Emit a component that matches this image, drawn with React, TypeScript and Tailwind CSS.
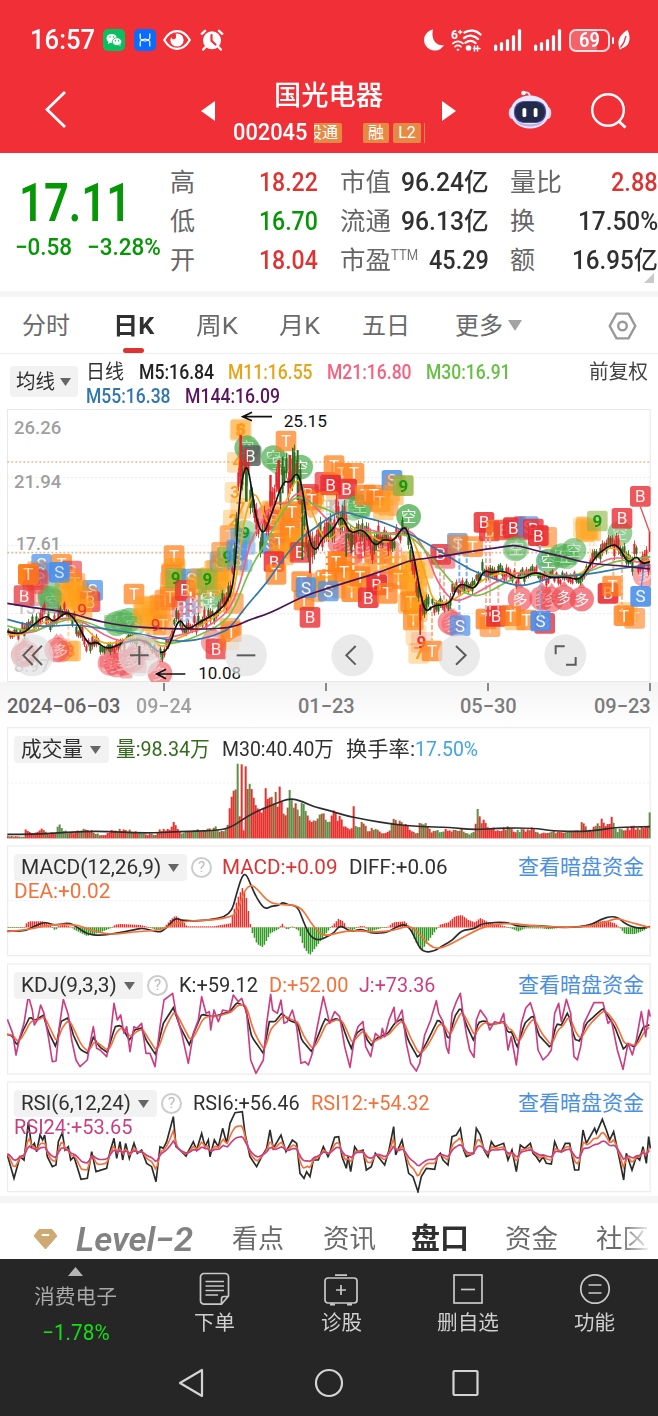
import { useLayoutEffect, useRef, useState, type ReactNode } from "react";

type Pt = [number, number];

const shift = (pts: Pt[], dx: number): Pt[] => pts.map(([x, y]) => [x + dx, y]);

/** Chart space uses three units per pixel. */
const LEFT = 22;
const RIGHT = 1950;
const STEP = 6;

function valueAt(pts: Pt[], x: number): number {
  if (x <= pts[0][0]) return pts[0][1];
  for (let i = 1; i < pts.length; i++) {
    if (x <= pts[i][0]) {
      const [x0, y0] = pts[i - 1];
      const [x1, y1] = pts[i];
      return y0 + ((y1 - y0) * (x - x0)) / (x1 - x0 || 1);
    }
  }
  return pts[pts.length - 1][1];
}

function sample(pts: Pt[]): Pt[] {
  const out: Pt[] = [];
  for (let x = LEFT; x <= RIGHT; x += STEP) out.push([x, valueAt(pts, x)]);
  return out;
}

function ema(pts: Pt[], k: number): Pt[] {
  let v = pts[0][1];
  return pts.map(([x, y]) => {
    v += (y - v) * k;
    return [x, v];
  });
}

const squeeze = (pts: Pt[], mid: number, k: number): Pt[] => pts.map(([x, y]) => [x, mid + (y - mid) * k]);

const noise = (i: number) => {
  const s = Math.sin(i * 127.1 + 31.7) * 43758.5453;
  return s - Math.floor(s);
};

const poly = (pts: Pt[]) => pts.map(([x, y]) => `${x.toFixed(1)},${y.toFixed(1)}`).join(" ");

function smooth(pts: Pt[]): string {
  let d = `M${pts[0][0]} ${pts[0][1]}`;
  for (let i = 1; i < pts.length - 1; i++) {
    const [x, y] = pts[i];
    const [nx, ny] = pts[i + 1];
    d += ` Q${x} ${y} ${(x + nx) / 2} ${(y + ny) / 2}`;
  }
  const last = pts[pts.length - 1];
  return d + ` L${last[0]} ${last[1]}`;
}

const M144: Pt[] = [
  [22, 595], [100, 608], [180, 618], [230, 630], [300, 650], [380, 664], [480, 670], [600, 673], [700, 668], [745, 645], [810, 625],
  [900, 578], [980, 550], [1080, 520], [1150, 498], [1220, 470], [1250, 463], [1320, 455], [1410, 440], [1510, 425], [1550, 420],
  [1600, 435], [1690, 455], [1760, 475], [1860, 482], [1950, 492],
];
const M55: Pt[] = [
  [22, 643], [80, 660], [150, 665], [220, 658], [290, 668], [360, 678], [440, 690], [500, 705], [560, 710], [620, 698], [660, 685],
  [690, 670], [745, 595], [800, 535], [850, 460], [900, 400], [950, 365], [1000, 328], [1030, 318], [1080, 335], [1130, 345],
  [1200, 372], [1260, 403], [1340, 450], [1410, 495], [1490, 525], [1560, 545], [1610, 532], [1660, 515], [1720, 512], [1780, 505],
  [1860, 490], [1950, 480],
];
const M30: Pt[] = [
  [22, 662], [90, 685], [150, 660], [210, 640], [260, 650], [330, 680], [400, 685], [440, 700], [490, 718], [540, 712], [600, 690],
  [660, 660], [700, 620], [750, 490], [800, 410], [840, 330], [890, 266], [940, 300], [980, 312], [1030, 340], [1070, 378],
  [1130, 385], [1180, 388], [1230, 390], [1280, 440], [1320, 490], [1370, 550], [1425, 578], [1480, 555], [1540, 518], [1600, 508],
  [1660, 512], [1720, 515], [1780, 495], [1840, 470], [1880, 465], [1950, 455],
];
const M21: Pt[] = [
  [22, 680], [90, 690], [150, 655], [200, 635], [260, 655], [310, 690], [370, 712], [440, 700], [500, 700], [540, 690], [600, 675],
  [650, 650], [690, 610], [720, 540], [750, 410], [780, 360], [810, 310], [835, 290], [860, 300], [890, 260], [920, 280],
  [960, 320], [1000, 365], [1030, 385], [1070, 380], [1100, 370], [1140, 385], [1190, 385], [1230, 370], [1280, 440], [1310, 530],
  [1360, 593], [1410, 575], [1480, 535], [1540, 505], [1600, 500], [1660, 512], [1730, 515], [1770, 495], [1820, 460], [1880, 458],
  [1910, 475], [1950, 455],
];
const M11: Pt[] = [
  [22, 688], [70, 695], [130, 650], [180, 640], [220, 640], [260, 670], [300, 715], [350, 715], [400, 690], [450, 705], [490, 730],
  [530, 700], [560, 690], [600, 662], [640, 640], [690, 600], [710, 520], [730, 350], [760, 258], [780, 290], [805, 365],
  [825, 345], [850, 310], [890, 213], [910, 250], [940, 330], [970, 405], [1000, 400], [1025, 355], [1050, 375], [1100, 380],
  [1130, 405], [1170, 415], [1210, 370], [1240, 400], [1280, 520], [1300, 595], [1350, 592], [1420, 545], [1480, 505],
  [1540, 505], [1600, 500], [1660, 515], [1720, 510], [1750, 505], [1800, 440], [1840, 425], [1880, 450], [1910, 475], [1950, 465],
];
const M5: Pt[] = [
  [22, 680], [60, 692], [100, 660], [140, 628], [160, 655], [200, 616], [230, 650], [265, 722], [290, 708], [320, 735], [370, 712],
  [430, 700], [485, 752], [510, 720], [537, 634], [560, 678], [600, 650], [650, 625], [690, 580], [705, 500], [720, 250],
  [740, 168], [755, 250], [770, 350], [790, 392], [810, 340], [850, 225], [870, 235], [892, 196], [910, 260], [928, 415],
  [950, 440], [965, 400], [1000, 375], [1025, 325], [1050, 390], [1090, 368], [1125, 428], [1150, 400], [1180, 412], [1210, 362],
  [1225, 380], [1245, 470], [1260, 560], [1276, 625], [1300, 600], [1350, 600], [1370, 545], [1390, 535], [1425, 557], [1450, 494],
  [1475, 505], [1510, 495], [1560, 527], [1605, 497], [1650, 520], [1700, 515], [1740, 527], [1770, 480], [1800, 440], [1840, 416],
  [1860, 430], [1885, 478], [1910, 450], [1925, 477], [1950, 470],
];

const SPREAD: Pt[] = [
  [22, 22], [100, 32], [130, 38], [260, 36], [300, 26], [420, 24], [520, 32], [620, 34], [690, 44], [715, 90], [740, 90], [780, 60],
  [830, 75], [890, 80], [920, 90], [950, 66], [1030, 66], [1100, 60], [1200, 46], [1260, 60], [1290, 30], [1360, 34], [1500, 36],
  [1600, 28], [1720, 26], [1780, 38], [1840, 44], [1940, 44], [1950, 60],
];

type Kind = "T" | "B" | "S" | "空" | "多" | "O" | "G" | "X";
type Mark = [number, number, Kind, number?, string?];
const FILLS: Record<Kind, string> = {
  T: "#ff7f1a", B: "#ea2e33", S: "#4a90ea", 空: "#4faf52", 多: "#f04c54", O: "#ffa11c", G: "#8fb23c", X: "#555555",
};

const MARKS: Mark[] = [
  [125, 478, "S"], [112, 500, "T", 0.5], [185, 478, "T"], [215, 498, "B", 0.6], [208, 520, "T", 0.6], [225, 535, "T", 0.5],
  [95, 515, "B", 0.6], [112, 525, "B", 0.6], [120, 505, "S", 0.5], [85, 508, "T", 0.95], [178, 502, "S", 0.85], [72, 572, "B"],
  [120, 572, "B", 0.4], [150, 580, "空", 0.6], [158, 588, "空", 0.5], [195, 560, "O", 0.6], [215, 575, "O", 0.6],
  [235, 560, "O", 0.7], [205, 600, "O", 0.5], [240, 585, "O", 0.6], [278, 556, "S"], [270, 590, "B"], [262, 575, "T", 0.5],
  [246, 613, "O", 0.6], [205, 738, "O", 0.45], [212, 738, "O", 0.5, "8"], [70, 750, "多", 0.6], [80, 745, "多", 0.4],
  [170, 735, "多", 0.5], [182, 735, "多", 0.4], [350, 656, "空", 0.6], [368, 650, "空", 0.5], [388, 645, "空", 0.6],
  [400, 660, "空", 0.4], [402, 567, "T"], [435, 605, "O", 0.55], [455, 620, "O", 0.55], [430, 640, "O", 0.5],
  [470, 640, "O", 0.55], [480, 600, "T", 0.6], [495, 585, "T", 0.6], [467, 660, "O", 0.5], [490, 660, "T", 0.5],
  [522, 452, "T"], [525, 490, "O", 0.6], [515, 510, "T", 0.6], [520, 545, "O", 0.6], [510, 575, "T", 0.6], [527, 520, "G", 0.7, "9"],
  [575, 522, "S", 0.7], [556, 556, "B", 0.7], [575, 595, "B", 0.4], [565, 620, "S", 0.4], [545, 605, "B", 0.4],
  [590, 545, "O", 0.6], [600, 520, "O", 0.5], [640, 570, "空", 0.5], [625, 580, "空", 0.4],
  [640, 545, "O", 0.4], [655, 520, "O", 0.55], [650, 495, "O", 0.5], [660, 470, "S", 0.6], [668, 500, "O", 0.6],
  [622, 522, "G", 0.7, "9"], [665, 442, "T", 0.6], [690, 392, "T", 0.6], [675, 540, "O", 0.4], [700, 480, "O", 0.5],
  [682, 455, "G", 0.7, "9"], [330, 775, "多", 0.5], [350, 780, "多", 0.5], [372, 775, "多", 0.5], [398, 765, "多", 0.5],
  [420, 735, "多", 0.35], [445, 730, "多", 0.3], [480, 805, "多", 0.6], [640, 712, "多", 0.5], [648, 732, "B"],
  [690, 670, "T", 0.5], [700, 595, "T", 0.6], [686, 705, "O", 0.3], [694, 680, "T", 0.7],
  [724, 72, "O", 0.4, "8"], [720, 76, "O", 0.4, "5"], [712, 172, "O", 0.35, "4"], [705, 262, "O", 0.3, "3"],
  [700, 345, "O", 0.35, "2"], [722, 310, "O", 0.35, "7"], [720, 400, "S", 0.5], [710, 435, "S", 0.6], [712, 465, "S", 0.5],
  [740, 128, "空"], [750, 140, "空", 0.4], [751, 152, "X", 0.8], [736, 382, "空", 0.4, "9"],
  [820, 158, "空"], [838, 172, "空", 0.5], [858, 108, "T"], [902, 186, "空"], [800, 338, "多", 0.6], [815, 318, "O", 0.6],
  [822, 345, "B", 0.4], [812, 415, "S", 0.8], [838, 415, "T", 0.8], [850, 365, "O", 0.6], [870, 380, "T", 0.8], [876, 320, "T", 0.8],
  [850, 450, "O", 0.6], [885, 420, "O", 0.5], [822, 470, "B", 0.85], [828, 508, "T", 0.75], [900, 400, "O", 0.5],
  [900, 442, "B", 0.75], [925, 268, "B", 0.75], [935, 285, "T", 0.7], [975, 232, "B", 0.7], [1002, 182, "T"], [1025, 205, "T", 0.6],
  [1062, 205, "T", 0.75], [992, 240, "B", 0.95], [1040, 252, "B", 0.85], [985, 290, "O", 0.4], [1010, 315, "S", 0.3],
  [1060, 310, "空", 0.5], [1080, 305, "空", 0.6], [1096, 270, "T", 0.8], [1122, 270, "T", 0.7], [1140, 290, "T", 0.6],
  [1150, 315, "O", 0.5], [1176, 226, "S", 0.85], [1186, 240, "T", 0.5], [1180, 270, "O", 0.5], [1210, 242, "G", 0.8, "9"],
  [1226, 334, "空", 0.8], [1020, 415, "多", 0.6], [1045, 425, "多", 0.5], [1060, 440, "多", 0.5], [1080, 430, "B", 0.45],
  [1115, 440, "多", 0.5], [1145, 440, "多", 0.6], [1170, 440, "多", 0.5], [1160, 460, "O", 0.5], [1120, 470, "O", 0.4],
  [1042, 480, "O", 0.5], [1008, 470, "T", 0.9], [1032, 500, "T", 0.75], [980, 525, "T", 0.75], [970, 545, "O", 0.6],
  [905, 530, "T", 0.75], [912, 585, "T", 0.75], [918, 548, "S", 0.8], [930, 637, "B", 0.8],
  [985, 558, "S"], [1055, 560, "T", 0.8], [1065, 530, "O", 0.5], [1080, 515, "T", 0.75],
  [1150, 530, "B", 0.4], [1130, 540, "B", 0.9], [1105, 578, "B", 0.85], [1162, 565, "T", 0.75],
  [1190, 480, "O", 0.5], [1195, 522, "T", 0.75], [1215, 500, "O", 0.5], [1235, 470, "O", 0.5], [1245, 500, "O", 0.6],
  [1235, 545, "O", 0.6], [1250, 560, "O", 0.6], [1225, 595, "O", 0.5], [1232, 590, "T", 0.7], [1250, 600, "O", 0.5],
  [1240, 645, "T", 0.7], [1252, 620, "O", 0.5], [1248, 690, "O", 0.3], [1256, 745, "O", 0.35, "7"],
  [1264, 712, "B", 0.15, "9"], [1296, 738, "T", 0.75], [1270, 490, "O", 0.5],
  [1335, 460, "B", 0.5], [1322, 448, "B", 0.8], [1372, 415, "S", 0.7], [1375, 420, "T", 0.6], [1418, 425, "T", 0.7],
  [1350, 652, "多", 0.6], [1362, 658, "多", 0.4], [1380, 662, "S"], [1468, 378, "B", 0.8], [1452, 352, "B", 0.85],
  [1490, 375, "O", 0.5], [1512, 375, "B", 0.6], [1540, 368, "B", 0.9], [1585, 365, "S", 0.7], [1600, 372, "B", 0.8],
  [1640, 397, "T", 0.6], [1615, 392, "B", 0.9], [1545, 432, "空", 0.45], [1550, 430, "空", 0.4], [1645, 468, "空", 0.7],
  [1685, 452, "空", 0.6], [1700, 455, "空", 0.5], [1722, 436, "空", 0.6], [1560, 582, "多", 0.65], [1625, 580, "多", 0.6],
  [1655, 584, "多", 0.6], [1692, 578, "多", 0.7], [1745, 582, "多", 0.7], [1470, 665, "T", 0.6], [1458, 642, "T", 0.8],
  [1500, 632, "B", 0.5], [1488, 634, "B", 0.85], [1545, 645, "O", 0.5], [1532, 632, "T", 0.7], [1580, 645, "T", 0.7],
  [1634, 655, "B", 0.8], [1622, 648, "S", 0.9], [1758, 372, "O", 0.5], [1772, 378, "O", 0.5], [1750, 368, "O", 0.3],
  [1792, 348, "G", 0.6, "9"], [1860, 384, "空", 0.6], [1866, 340, "B", 0.8], [1824, 565, "B", 0.9], [1838, 543, "T", 0.75],
  [1904, 640, "T", 0.6], [1882, 622, "O", 0.4], [1872, 632, "T", 0.8], [1935, 510, "多", 0.5], [1922, 574, "S", 0.9],
  [1921, 274, "B", 0.8],
];

/** Patches where many signals pile up: centre, radii, count, colour. */
const CLOUDS: [number, number, number, number, number, string][] = [
  [225, 570, 34, 44, 34, "#ffa11c"], [150, 575, 30, 26, 16, "#56b257"], [110, 525, 34, 34, 16, "#e8463c"],
  [455, 625, 48, 40, 46, "#ffa11c"], [515, 530, 30, 70, 30, "#ff8d1c"], [600, 530, 30, 30, 20, "#ffa11c"],
  [650, 510, 40, 50, 36, "#ffa11c"], [372, 650, 40, 28, 20, "#56b257"], [372, 770, 60, 34, 26, "#f0727a"],
  [865, 390, 44, 90, 50, "#ff7f1a"], [730, 430, 18, 60, 16, "#6aa5ea"], [930, 290, 34, 40, 20, "#ff7f1a"],
  [970, 540, 60, 40, 26, "#ff7f1a"], [1040, 480, 40, 50, 26, "#ff7f1a"], [1100, 430, 90, 40, 40, "#f26a6a"],
  [1130, 500, 70, 50, 30, "#ff7f1a"], [1150, 290, 50, 34, 24, "#ff7f1a"], [1240, 560, 28, 90, 60, "#ffa11c"],
  [1075, 300, 30, 24, 12, "#56b257"], [1530, 372, 70, 24, 20, "#ea2e33"], [1650, 582, 60, 22, 14, "#f04c54"],
  [1760, 372, 24, 24, 16, "#ffa11c"], [1670, 458, 50, 22, 14, "#4faf52"],
];

function Clouds() {
  return (
    <g opacity="0.55">
      {CLOUDS.map(([cx, cy, rx, ry, n, c], k) =>
        Array.from({ length: n }, (_, i) => {
          const a = noise(k * 97 + i) * Math.PI * 2;
          const r = Math.sqrt(noise(k * 53 + i + 300));
          const s = 16 + noise(k * 31 + i + 700) * 24;
          return (
            <rect key={`${k}-${i}`} x={cx + Math.cos(a) * r * rx - s / 2} y={cy + Math.sin(a) * r * ry - s / 2} width={s} height={s} rx="5" fill={c} />
          );
        }),
      )}
    </g>
  );
}

const RAILS: [number, number, number, string][] = [
  [553, 590, 670, "#fff"], [572, 560, 660, "#fff"], [545, 600, 660, "#f48aa0"], [562, 580, 650, "#7fb0ee"], [632, 560, 650, "#fff"],
  [590, 570, 640, "#ffe3c4"], [605, 570, 640, "#ffe3c4"], [975, 270, 350, "#fff"], [985, 290, 370, "#fff"], [980, 440, 530, "#fff"],
  [955, 440, 520, "#fff"], [1060, 400, 500, "#fff"], [1090, 400, 480, "#fff"], [1135, 420, 520, "#fff"], [1180, 420, 480, "#fff"],
  [1200, 400, 500, "#ffe3c4"], [1320, 480, 590, "#f6b2a8"], [1332, 490, 590, "#f6b2a8"], [1378, 440, 640, "#7fb0ee"],
  [1400, 440, 560, "#7fb0ee"], [1458, 400, 640, "#f6b2a8"], [1470, 400, 640, "#f6b2a8"], [1495, 520, 620, "#f6b2a8"],
  [1545, 470, 620, "#ffcfa8"], [1620, 420, 640, "#7fb0ee"], [1866, 410, 620, "#ffb27a"], [1296, 620, 710, "#ffb27a"],
  [205, 640, 710, "#ffd9a0"], [1770, 410, 480, "#ffe3c4"], [1782, 410, 470, "#ffe3c4"], [1840, 460, 520, "#ffb27a"],
];

function Marker({ m }: { m: Mark }) {
  const [x, y, kind, opacity = 0.72, digit] = m;
  const round = kind === "空" || kind === "多";
  const green = kind === "G" || (kind === "空" && digit);
  const label = digit ?? (kind === "O" || kind === "G" ? "" : kind === "X" ? "B" : kind);
  return (
    <g>
      {round ? (
        <>
          <circle cx={x} cy={y} r="37" fill={FILLS[kind]} opacity={opacity} />
          {kind === "多" && <path d={`M${x - 12} ${y - 34} L${x} ${y - 50} L${x + 12} ${y - 34}Z`} fill={FILLS[kind]} opacity={opacity} />}
        </>
      ) : (
        <rect x={x - 31} y={y - 31} width="62" height="62" rx="8" fill={FILLS[kind]} opacity={opacity} />
      )}
      {label && (
        <text
          x={x}
          y={y + (round ? 17 : 18)}
          textAnchor="middle"
          fontSize={round ? 46 : 51}
          opacity={digit || opacity >= 0.65 ? 0.95 : 0.55}
          fill={digit ? (green ? "#0a9a0a" : digit === "9" ? "#ea2e33" : "#ff9a1a") : "#fff"}
          fontWeight={digit ? 700 : 400}
        >
          {label}
        </text>
      )}
    </g>
  );
}

const PRICE_LINES: [Pt[], string][] = [
  [M11, "#f0a818"], [M21, "#f5617e"], [M30, "#74c043"], [M55, "#2f77ad"], [M144, "#4b1357"], [M5, "#111111"],
];

function Candles() {
  const bars = [];
  for (let x = LEFT + 2, i = 0; x < RIGHT; x += STEP, i++) {
    const mid = valueAt(M5, x + 7);
    const s = valueAt(SPREAD, x);
    const up = noise(i) > 0.42;
    const drift = (noise(i + 77) - 0.5) * s * 0.9;
    const a = mid + drift - s * (0.2 + noise(i + 900) * 0.6);
    const b = mid + drift + s * (0.2 + noise(i + 500) * 0.6);
    const c = up ? "#e0282c" : "#2f6b1c";
    bars.push(
      <g key={i} fill={c}>
        <rect x={x} y={a} width="2.5" height={b - a} />
        <rect x={x - 2} y={a + (b - a) * 0.2} width="6.5" height={(b - a) * 0.6} />
      </g>,
    );
  }
  return (
    <g>
      {bars}
      <path d="M718 90 V215 H726 V90Z M734 130 V210 H740 V130Z" fill="#e0282c" />
      <path d="M735 200 h8 v90 h-8z M890 135 h6 v150 h-6z M876 128 h5 v110 h-5z M845 155 h6 v110 h-6z" fill="#2f6b1c" />
      <path d="M808 210 h7 v90 h-7z M832 165 h8 v95 h-8z M866 150 h8 v80 h-8z" fill="#e0282c" />
      <path d="M904 335 h6 v130 h-6z M1036 380 h5 v75 h-5z M1052 370 h5 v75 h-5z" fill="#2f6b1c" />
      <path d="M927 420 h6 v85 h-6z M1258 600 h5 v90 h-5z M1946 380 h5 v60 h-5z" fill="#e0282c" />
    </g>
  );
}

function PriceChart() {
  return (
    <svg className="h-[273px] w-[644px]" viewBox="21 12 1932 819" fontFamily='Roboto,"Noto Sans CJK SC",sans-serif'>
      <rect x="22.5" y="13.5" width="1928" height="816" fill="#fff" stroke="#e8e8e8" strokeWidth="3" />
      <g strokeDasharray="6 6" fill="none">
        <path d="M22 217H1950M22 421H1950M22 626H1950" stroke="#e9e9e9" strokeWidth="3" />
        <path d="M22 171H1950M22 443H1950" stroke="#e2bd94" strokeWidth="5" />
      </g>
      {MARKS.slice(0, 40).map((m, i) => (
        <Marker key={i} m={m} />
      ))}
      <Clouds />
      {MARKS.slice(40).map((m, i) => (
        <Marker key={i} m={m} />
      ))}
      <Marker m={[85, 508, "T", 0.6]} />
      <Marker m={[178, 502, "S", 0.6]} />
      {RAILS.map(([x, y0, y1, c], i) => (
        <path key={i} d={`M${x} ${y0}V${y1}`} stroke={c} strokeWidth="6" strokeDasharray="14 6" />
      ))}
      <Candles />
      <g fontSize="56" fontWeight="500" fill="#8e8e8e" fillOpacity="0.85">
        <text x="42" y="87" textLength="142" lengthAdjust="spacingAndGlyphs">26.26</text>
        <text x="42" y="248" textLength="142" lengthAdjust="spacingAndGlyphs">21.94</text>
        <text x="48" y="436" textLength="134" lengthAdjust="spacingAndGlyphs">17.61</text>
        <text x="48" y="626" textLength="134" lengthAdjust="spacingAndGlyphs" fillOpacity="0.5">13.29</text>
        <text x="42" y="800" textLength="108" lengthAdjust="spacingAndGlyphs" fillOpacity="0.5">8.97</text>
      </g>
      <path d="M1921 305 L1950 385" stroke="#ea4a50" strokeWidth="4" />
      <path d="M1924 545 L1932 480" stroke="#4a90ea" strokeWidth="4" />
      {PRICE_LINES.map(([pts, c]) => (
        <path key={c} d={smooth(pts)} stroke={c} strokeWidth="5" fill="none" />
      ))}
      <text x="467" y="677" textAnchor="middle" fontSize="52" fill="#ea2e33">9</text>
      <text x="246" y="632" textAnchor="middle" fontSize="52" fill="#ea2e33">9</text>
      <g stroke="#111" strokeWidth="5" fill="none">
        <path d="M816 35H730M756 22L728 35L756 47" />
        <path d="M556 807H472M498 793L470 807L498 821" />
      </g>
      <g fontSize="52" fill="#111">
        <text x="851" y="66" textLength="130" lengthAdjust="spacingAndGlyphs">25.15</text>
        <text x="595" y="822" textLength="128" lengthAdjust="spacingAndGlyphs">10.08</text>
      </g>
      <g fill="#e0e0e0" fillOpacity="0.68">
        {[97, 418, 738, 1057, 1377, 1696].map((x) => (
          <circle key={x} cx={x} cy="751" r="63" />
        ))}
      </g>
      <g stroke="#5c5c5c" strokeWidth="6" fill="none">
        <path d="M98 722L70 751L98 780M126 722L98 751L126 780" />
        <path d="M390 751H446M418 723V779" />
        <path d="M710 751H766" />
        <path d="M1067 723L1039 751L1067 779" />
        <path d="M1368 723L1397 751L1368 779" />
        <path d="M1667 748V724H1694M1727 756V779H1698" />
      </g>
    </svg>
  );
}

const VOLUME: Pt[] = [
  [22, 8], [72, 6], [78, 28], [86, 26], [92, 14], [112, 18], [120, 28], [134, 28], [142, 16], [156, 18], [168, 18], [174, 50],
  [180, 40], [190, 22], [230, 20], [250, 28], [270, 28], [300, 10], [322, 14], [336, 24], [360, 28], [400, 24], [440, 12],
  [472, 14], [480, 28], [505, 26], [514, 38], [521, 50], [528, 32], [545, 16], [600, 26], [636, 30], [642, 44], [650, 26],
  [682, 26], [690, 92], [697, 128], [703, 150], [708, 140],
];
const VOLUME_TAIL: Pt[] = [
  [744, 146], [750, 172], [756, 140], [762, 110], [770, 90], [780, 88], [790, 68], [797, 154], [803, 116], [810, 118], [816, 128],
  [822, 90], [828, 137], [833, 90], [840, 150], [848, 76], [858, 70], [864, 90], [870, 142], [878, 88], [888, 110], [898, 52],
  [906, 110], [914, 92], [924, 60], [932, 45], [940, 55], [950, 52], [965, 80], [978, 60], [984, 55], [1004, 78], [1026, 55],
  [1045, 35], [1056, 36], [1062, 86], [1068, 36], [1086, 52], [1104, 24], [1122, 34], [1144, 16], [1168, 22], [1176, 62], [1182, 74],
  [1190, 45], [1200, 68], [1214, 45], [1224, 42], [1236, 22], [1252, 12], [1260, 54], [1280, 38], [1294, 20], [1354, 28],
  [1384, 28], [1399, 12], [1422, 18], [1428, 50], [1434, 94], [1440, 64], [1450, 50], [1464, 34], [1484, 28], [1524, 34], [1544, 22],
  [1594, 30], [1614, 16], [1654, 24], [1684, 18], [1724, 22], [1740, 22], [1746, 66], [1752, 54], [1760, 22], [1778, 26],
  [1784, 55], [1796, 42], [1806, 62], [1820, 40], [1836, 62], [1848, 22], [1884, 34], [1914, 34], [1942, 30], [1948, 84],
];
const PEAKS: Record<number, [number, string]> = {
  710: [224, "#628f49"], 716: [66, "#e6312f"], 722: [222, "#e6312f"], 728: [24, "#e6312f"], 734: [216, "#e6312f"], 740: [148, "#ab5a38"],
};
const VOLUME_MA: Pt[] = [
  [22, 328], [100, 328], [200, 322], [300, 318], [430, 325], [540, 320], [640, 317], [690, 310], [750, 268], [820, 238], [870, 219],
  [910, 230], [940, 245], [990, 257], [1030, 270], [1100, 285], [1180, 298], [1260, 305], [1350, 307], [1420, 315], [1500, 309],
  [1600, 309], [1660, 318], [1740, 320], [1800, 315], [1850, 307], [1950, 305],
];

function PanelFrame({ children, top, bottom, guide }: { children: ReactNode; top: number; bottom: number; guide: number }) {
  return (
    <>
      <rect x="22.5" y={top} width="1928" height={bottom - top} fill="#fff" stroke="#ededed" strokeWidth="4" />
      <path d={`M22 ${guide}H1950`} stroke="#ededed" strokeWidth="3" strokeDasharray="6 6" />
      {children}
    </>
  );
}

function VolumeChart() {
  const bars = [];
  for (let x = 20, i = 0; x < RIGHT - 2; x += STEP, i++) {
    const pts = x < 740 ? VOLUME : VOLUME_TAIL;
    const jitter = x < 680 || x > 970 ? 0.7 + noise(i + 40) * 0.42 : 0.94 + noise(i + 40) * 0.1;
    const run = noise(Math.floor(i / 3) + 12);
    const r = run * 0.7 + noise(i + 5) * 0.3;
    const peak = PEAKS[x];
    const h = peak ? peak[0] : Math.max(valueAt(pts, x + 2), valueAt(pts, x + 4)) * jitter;
    const c = peak ? peak[1] : x > 1940 || (x > 1426 && x < 1436) || x === 746 ? "#628f49" : r > 0.48 ? "#e6312f" : r > 0.27 ? "#ab5a38" : "#628f49";
    bars.push(<rect key={i} x={x} y={340 - h} width="6" height={h} fill={c} />);
  }
  return (
    <svg className="h-[113px] w-[644px]" viewBox="21 6 1932 339">
      <PanelFrame top={8} bottom={340} guide={174}>
        {bars}
        <path d={smooth(VOLUME_MA)} stroke="#2c2c2c" strokeWidth="5" fill="none" />
      </PanelFrame>
    </svg>
  );
}

const HIST: Pt[] = [
  [22, -2], [70, -2], [80, 15], [90, 18], [130, 18], [150, 4], [165, -10], [175, 5], [190, 8], [210, 2], [220, -6], [260, -26],
  [300, -15], [330, -3], [345, 8], [360, 10], [420, 7], [440, 2], [470, -8], [490, -2], [510, 22], [525, 35], [545, 22], [560, 3],
  [640, 3], [690, 12], [700, 50], [715, 95], [728, 122], [738, 88], [750, 10], [755, -15], [770, -50], [788, -60], [810, -18],
  [835, -5], [845, 12], [860, -8], [875, 3], [895, -10], [910, -60], [928, -84], [950, -55], [985, -8], [999, 8], [1014, 25],
  [1029, 18], [1039, 0], [1054, -10], [1079, 4], [1094, 3], [1104, -14], [1144, -2], [1164, 2], [1179, 15], [1214, 18], [1229, 0],
  [1244, -40], [1264, -70], [1284, -40], [1309, -5], [1319, 8], [1344, 15], [1364, 33], [1384, 37], [1404, 22], [1424, 15],
  [1439, 28], [1464, 15], [1514, 3], [1534, -4], [1554, -12], [1574, -3], [1624, -3], [1644, -6], [1674, -2], [1734, 3],
  [1784, 15], [1814, 20], [1844, 12], [1859, -2], [1874, -20], [1904, -20], [1934, -8], [1950, 5],
];
const DIFF: Pt[] = [
  [22, 618], [70, 620], [100, 605], [135, 590], [165, 602], [205, 592], [230, 605], [260, 627], [300, 632], [350, 625], [400, 615],
  [430, 608], [475, 624], [500, 610], [525, 578], [550, 588], [620, 587], [692, 572], [710, 505], [726, 452], [738, 446],
  [752, 478], [770, 520], [795, 554], [815, 542], [835, 543], [848, 531], [865, 540], [893, 543], [910, 590], [930, 634], [955, 647],
  [984, 634], [1004, 622], [1014, 606], [1029, 604], [1054, 622], [1084, 610], [1114, 626], [1164, 622], [1184, 608], [1214, 596],
  [1234, 615], [1254, 660], [1268, 680], [1300, 681], [1334, 658], [1359, 645], [1384, 616], [1424, 612], [1446, 594], [1524, 591],
  [1554, 606], [1604, 600], [1674, 608], [1764, 605], [1804, 582], [1834, 574], [1856, 578], [1874, 596], [1914, 612], [1950, 605],
];
const DEA: Pt[] = [
  [22, 620], [90, 614], [150, 598], [230, 598], [270, 615], [330, 630], [400, 620], [480, 616], [520, 597], [560, 588], [640, 585],
  [695, 575], [712, 560], [735, 492], [755, 479], [775, 495], [800, 527], [830, 539], [900, 540], [930, 590], [960, 628], [984, 632],
  [1044, 615], [1124, 622], [1184, 616], [1224, 602], [1249, 615], [1274, 648], [1304, 672], [1334, 666], [1384, 640], [1434, 612],
  [1484, 596], [1544, 596], [1604, 603], [1684, 607], [1774, 605], [1834, 585], [1854, 580], [1884, 590], [1950, 608],
];

function MacdChart() {
  const bars = [];
  for (let x = LEFT + 2, i = 0; x < RIGHT; x += STEP, i++) {
    const v = valueAt(HIST, x);
    bars.push(<rect key={i} x={x - 1} y={v > 0 ? 607 - v : 607} width="4.5" height={Math.max(2, Math.abs(v))} fill={v > 0 ? "#e6312f" : "#2f9a22"} />);
  }
  return (
    <svg className="h-[112px] w-[644px]" viewBox="21 360 1932 336">
      <PanelFrame top={363} bottom={692} guide={527}>
        <path d="M22 607H1950" stroke="#f0b8a8" strokeWidth="2" />
        {bars}
        <path d={smooth(DIFF)} stroke="#2b2b2b" strokeWidth="5" fill="none" />
        <path d={smooth(DEA)} stroke="#f4713a" strokeWidth="5" fill="none" />
      </PanelFrame>
    </svg>
  );
}

const J: Pt[] = [
  [22, 178], [38, 220], [48, 285], [60, 230], [72, 190], [85, 108], [97, 150], [103, 195], [112, 180], [122, 135], [132, 160],
  [145, 230], [157, 305], [168, 303], [178, 200], [190, 118], [205, 165], [215, 240], [228, 300], [240, 320], [262, 300], [270, 250],
  [280, 200], [290, 265], [300, 270], [320, 290], [330, 240], [342, 130], [352, 180], [362, 165], [372, 220], [380, 200], [390, 275],
  [402, 200], [410, 205], [425, 190], [438, 280], [450, 280], [465, 320], [480, 200], [492, 120], [518, 100], [528, 160], [545, 220],
  [565, 310], [580, 220], [595, 180], [605, 110], [618, 160], [628, 155], [632, 210], [642, 150], [655, 185], [668, 150], [688, 155],
  [700, 105], [715, 125], [725, 115], [740, 160], [752, 300], [768, 340], [790, 300], [800, 190], [812, 103], [818, 150],
  [832, 160], [843, 120], [852, 190], [862, 185], [877, 150], [890, 200], [903, 310], [915, 305], [925, 315], [937, 280], [950, 210],
  [970, 110],
  ...shift([
    [5, 190], [20, 155], [35, 170], [50, 260], [66, 322], [80, 230], [90, 200], [105, 185], [113, 260], [128, 290], [142, 220],
    [158, 235], [163, 205], [170, 230], [183, 180], [198, 142], [203, 190], [222, 150], [235, 250], [248, 310], [265, 333], [275, 310],
    [290, 225], [308, 180], [325, 122], [332, 160], [345, 185], [355, 260], [362, 280], [372, 160], [385, 125], [397, 100], [405, 160],
    [415, 220], [425, 270], [438, 292], [445, 180], [457, 150], [475, 175], [485, 210], [500, 185], [515, 190], [527, 160], [540, 270],
    [550, 230], [565, 315], [580, 190], [593, 145], [607, 128], [620, 170], [630, 270], [645, 300], [660, 285], [670, 270], [680, 160],
    [692, 130], [700, 185], [715, 118], [728, 160], [738, 290], [748, 300], [758, 260], [768, 190], [798, 128], [825, 128], [840, 190],
    [850, 180], [868, 270], [885, 328], [900, 250], [913, 285], [925, 240], [940, 155], [953, 230], [962, 150], [967, 170],
  ], 984),
];
const K: Pt[] = [
  [22, 223], [38, 228], [50, 258], [70, 210], [90, 170], [103, 182], [130, 166], [145, 215], [168, 262], [182, 185], [205, 173],
  [220, 225], [240, 268], [262, 280], [280, 232], [300, 262], [322, 277], [345, 200], [362, 196], [390, 243], [402, 210], [425, 204],
  [438, 240], [467, 284], [490, 190], [520, 143], [540, 200], [568, 254], [585, 210], [605, 163], [640, 170], [690, 155],
  [710, 128], [735, 138], [755, 230], [790, 280], [808, 185], [825, 185], [845, 160], [870, 182], [892, 190], [905, 240], [935, 275],
  [955, 225], [975, 176],
  ...shift([
    [5, 185], [25, 175], [40, 185], [55, 230], [70, 265], [85, 220], [105, 205], [118, 240], [130, 256], [145, 235], [180, 220],
    [200, 190], [222, 176], [240, 240], [270, 294], [300, 240], [330, 178], [345, 195], [362, 242], [380, 170], [398, 142], [415, 195],
    [438, 244], [450, 188], [470, 182], [485, 195], [527, 185], [540, 218], [552, 215], [567, 264], [590, 190], [615, 166], [632, 225],
    [668, 264], [685, 192], [700, 195], [720, 156], [740, 238], [755, 243], [775, 190], [825, 145], [860, 200], [887, 269], [900, 250],
    [920, 262], [945, 203], [967, 193],
  ], 984),
];

function KdjChart() {
  const k = sample(K);
  return (
    <svg className="h-[112px] w-[644px]" viewBox="21 9 1932 336">
      <PanelFrame top={12} bottom={342} guide={177}>
        <polyline points={poly(k)} stroke="#2b2b2b" strokeWidth="5" fill="none" />
        <polyline points={poly(ema(k, 0.38))} stroke="#f4713a" strokeWidth="5" fill="none" />
        <polyline points={poly(J)} stroke="#cb3f80" strokeWidth="5" fill="none" strokeLinejoin="round" />
      </PanelFrame>
    </svg>
  );
}

const RSI: Pt[] = [
  [22, 585], [42, 655], [60, 590], [72, 600], [85, 487], [95, 560], [103, 550], [110, 575], [120, 525], [128, 540], [134, 525],
  [142, 590], [157, 620], [168, 615], [175, 545], [187, 518], [195, 570], [205, 560], [212, 600], [222, 590], [243, 658], [262, 655],
  [275, 575], [288, 635], [320, 625], [330, 575], [342, 535], [350, 595], [360, 545], [368, 600], [377, 550], [388, 595], [402, 550],
  [412, 580], [425, 570], [440, 610], [455, 620], [468, 665], [480, 560], [490, 565], [500, 545], [520, 470], [528, 560], [545, 575],
  [558, 588], [580, 545], [590, 570], [605, 520], [615, 560], [625, 540], [630, 590], [643, 540], [655, 560], [668, 505], [680, 550],
  [690, 490], [705, 458], [727, 455], [735, 520], [750, 590], [770, 620], [785, 590], [800, 565], [810, 510], [820, 565], [843, 525],
  [858, 575], [877, 540], [890, 550], [900, 640], [912, 655], [920, 635], [930, 650], [940, 600], [955, 600], [970, 560],
  ...shift([
    [0, 590], [5, 580], [20, 532], [32, 530], [42, 590], [55, 625], [60, 590], [68, 635], [80, 560], [90, 575], [105, 570],
    [115, 630], [130, 620], [142, 580], [170, 615], [183, 570], [197, 500], [203, 585], [222, 540], [232, 590], [242, 640], [255, 650],
    [270, 695], [280, 650], [295, 625], [320, 628], [328, 590], [337, 580], [345, 600], [360, 615], [372, 530], [385, 525], [397, 505],
    [407, 570], [415, 590], [437, 580], [445, 505], [457, 525], [468, 570], [480, 590], [490, 545], [500, 560], [527, 550], [540, 600],
    [552, 570], [565, 635], [577, 555], [590, 565], [607, 550], [615, 580], [625, 590], [635, 605], [645, 590], [655, 610], [670, 612],
    [680, 545], [690, 570], [700, 575], [712, 550], [725, 550], [740, 630], [752, 630], [765, 510], [775, 550], [800, 505], [805, 520],
    [823, 478], [835, 510], [845, 540], [857, 515], [875, 600], [887, 660], [895, 580], [912, 630], [925, 590], [935, 600], [945, 560],
    [955, 610], [962, 530], [967, 565],
  ], 984),
];

function RsiChart() {
  const base = sample(RSI);
  return (
    <svg className="h-[112px] w-[644px]" viewBox="21 363 1932 336">
      <PanelFrame top={366} bottom={695} guide={531}>
        <polyline points={poly(RSI)} stroke="#2b2b2b" strokeWidth="5" fill="none" />
        <polyline points={poly(squeeze(ema(base, 0.72), 578, 0.66))} stroke="#f4713a" strokeWidth="5" fill="none" />
        <polyline points={poly(squeeze(ema(base, 0.5), 578, 0.4))} stroke="#cb3f80" strokeWidth="5" fill="none" />
      </PanelFrame>
    </svg>
  );
}

/** One line of text set to a fixed advance width. */
function Fit({ w, className = "", children }: { w: number; className?: string; children: ReactNode }) {
  const ref = useRef<HTMLSpanElement>(null);
  const [scale, setScale] = useState(1);
  useLayoutEffect(() => {
    if (ref.current && ref.current.offsetWidth) setScale(w / ref.current.offsetWidth);
  }, [w]);
  return (
    <span className={`inline-block shrink-0 whitespace-nowrap ${className}`} style={{ width: w }}>
      <span ref={ref} className="inline-block origin-left" style={{ transform: `scaleX(${scale})` }}>
        {children}
      </span>
    </span>
  );
}

function Signal() {
  return (
    <svg className="h-[22px] w-[28px]" viewBox="0 0 28 22" fill="#fff">
      <rect x="0" y="15.5" width="3.2" height="6.5" rx="1.6" />
      <rect x="5.9" y="13" width="3.2" height="9" rx="1.6" />
      <rect x="11.9" y="10" width="3.2" height="12" rx="1.6" />
      <rect x="17.9" y="6" width="3.2" height="16" rx="1.6" />
      <rect x="23.9" y="0" width="3.2" height="22" rx="1.6" />
    </svg>
  );
}

function StatusBar() {
  return (
    <div className="flex h-[80px] items-center pl-[30px] text-white">
      <Fit w={65} className="text-[28px] leading-[28px] font-medium">16:57</Fit>
      <svg className="ml-[8px] h-[22px] w-[22px]" viewBox="0 0 22 22">
        <rect width="22" height="22" rx="5" fill="#07c160" />
        <ellipse cx="8.7" cy="9.3" rx="5.2" ry="4.4" fill="#fff" />
        <path d="M5.5 12.5 L5 15 L8 13.4Z M17 15 l.6 2.2 -2.6-1.4Z" fill="#fff" />
        <ellipse cx="14" cy="12.7" rx="4.7" ry="3.9" fill="#fff" stroke="#07c160" strokeWidth=".8" />
        <g fill="#07c160"><circle cx="7" cy="8" r=".8" /><circle cx="10.4" cy="8" r=".8" /><circle cx="12.5" cy="11.8" r=".7" /><circle cx="15.5" cy="11.8" r=".7" /></g>
      </svg>
      <svg className="ml-[9px] h-[22px] w-[22px]" viewBox="0 0 22 22">
        <rect width="22" height="22" rx="5" fill="#0a6bff" />
        <path d="M6.2 4.5V9.5M15.8 4.5V9.5M6.2 17.5V12.5M15.8 17.5V12.5M6.2 9.5C8.5 12.8 13.5 12.8 15.8 9.5M6.2 12.5C8.5 9.2 13.5 9.2 15.8 12.5" stroke="#fff" strokeWidth="1.2" fill="none" />
      </svg>
      <svg className="ml-[7px] h-[22px] w-[28px]" viewBox="0 0 28 22">
        <path d="M1.2 11C5 4.6 9.2 2.2 14 2.2S23 4.6 26.8 11C23 17.4 18.8 19.8 14 19.8S5 17.4 1.2 11Z" fill="none" stroke="#fff" strokeWidth="2.2" />
        <circle cx="14" cy="11" r="6.6" fill="#fff" />
        <path d="M8 8C9 10.5 11 11 12.5 9.5 13.6 8 13.3 5.5 12 4.3L7 6Z" fill="#f12f37" />
      </svg>
      <svg className="ml-[9px] h-[22px] w-[24px]" viewBox="0 0 24 22">
        <circle cx="12" cy="11.3" r="9" fill="#fff" />
        <path d="M1.8 4.8 5 1.8M22.2 4.8 19 1.8M5.5 18 3.2 20.5M18.5 18 20.8 20.5" stroke="#fff" strokeWidth="2.4" strokeLinecap="round" />
        <path d="M11.5 6V11.8L15.5 15.5" stroke="#f12f37" strokeWidth="2.2" fill="none" strokeLinecap="round" />
      </svg>
      <svg className="ml-[200px] h-[22px] w-[20px]" viewBox="0 0 20 22">
        <path d="M9 0.5A10.6 10.6 0 1 0 20 16C13 17.5 6.5 11 9 .5Z" fill="#fff" />
      </svg>
      <svg className="ml-[7px] h-[23px] w-[31px]" viewBox="0 0 31 23" fill="none" stroke="#fff" strokeWidth="2.3" strokeLinecap="round">
        <path d="M13.5 3.5C19 .2 25.5 1.2 29.5 5.5M13 9C18 5.2 24 6.6 27 10M14.5 13.7C18 11 22 11.6 24.5 14" />
        <path d="M1.8 14.4C5 11.8 9 11.8 12 14.4M4 17.6C6 16 8 16 10 17.6" strokeWidth="1.7" />
        <circle cx="6.9" cy="20.8" r=".8" strokeWidth="1" fill="#fff" />
        <circle cx="17.5" cy="19" r="2.8" fill="#fff" stroke="none" />
        <path d="M23.5 17V22M26.5 17V22M22.5 19.5H29" strokeWidth="1.5" />
        <text x="0" y="9.5" fontSize="12" fontWeight="700" fontFamily="Roboto" fill="#fff" stroke="none">6</text>
        <path d="M7.5 3H10.9M9.2 1.3V4.7" strokeWidth="1.3" />
      </svg>
      <div className="ml-[12px]"><Signal /></div>
      <div className="ml-[12px]"><Signal /></div>
      <div className="ml-[7px] flex h-[23px] w-[41px] items-center justify-center rounded-[7px] border-2 border-white/80 bg-gradient-to-r from-white/25 from-70% to-transparent to-70%">
        <Fit w={21} className="text-[20px] leading-[20px] font-semibold">69</Fit>
      </div>
      <div className="ml-[2px] h-[7px] w-[2px] rounded bg-white" />
      <svg className="ml-[4px] h-[20px] w-[12px]" viewBox="0 0 12 20">
        <path d="M9.5 0C13 7 12.5 16 3.5 18.5L2 19.8C-1.5 12 1 5 9.5 0Z" fill="#fff" />
        <path d="M8 6C7 11 5 14.5 2.5 17.5" stroke="#f12f37" strokeWidth="1.3" fill="none" />
      </svg>
    </div>
  );
}

function TitleBar() {
  return (
    <div className="flex h-[73px] text-white">
      <svg className="mt-[10px] ml-[44px] h-[38px] w-[23px]" viewBox="0 0 23 38" fill="none" stroke="#fff" strokeWidth="2.8">
        <path d="M21 2 3 19.5 21 37" />
      </svg>
      <svg className="mt-[21px] ml-[134px] h-[20px] w-[14px]" viewBox="0 0 14 20"><path d="M14 0V20L0 10Z" fill="#fff" /></svg>
      <div className="ml-[18px] w-[192px]">
        <div className="flex h-[31px] items-center pl-[41px]">
          <Fit w={109} className="text-[27px] leading-[30px] font-medium">国光电器</Fit>
        </div>
        <div className="mt-[11px] flex h-[21px] items-center text-[16px] leading-[20px]">
          <Fit w={74} className="text-[23px] font-medium">002045</Fit>
          <div className="ml-[7px] flex h-[20px] w-[28px] justify-end overflow-hidden rounded-r-[2px] bg-[#e58a45] pr-[4px]">
            <span className="whitespace-nowrap">股通</span>
          </div>
          <div className="ml-[21px] h-[20px] w-[26px] rounded-[2px] bg-[#e58a45] text-center">融</div>
          <div className="ml-[4px] h-[20px] w-[28px] rounded-[2px] bg-[#e58a45] text-center">L2</div>
          <div className="ml-[3px] h-[20px] w-px bg-[#e58a45]" />
        </div>
      </div>
      <svg className="mt-[21px] ml-[17px] h-[20px] w-[14px]" viewBox="0 0 14 20"><path d="M0 0V20L14 10Z" fill="#fff" /></svg>
      <svg className="mt-[9px] ml-[52px] h-[40px] w-[44px]" viewBox="0 0 44 40">
        <path d="M15 4.5C19 2 22 3.5 22 9" stroke="#e7e6fb" strokeWidth="1.8" fill="none" />
        <circle cx="15.5" cy="4" r="2.3" fill="#fff" />
        <ellipse cx="4" cy="24" rx="3.3" ry="6" fill="#d5d0f2" />
        <ellipse cx="40" cy="24" rx="3.3" ry="6" fill="#d5d0f2" />
        <ellipse cx="22" cy="23" rx="19.5" ry="16.5" fill="#e9e9fd" />
        <path d="M6 30C12 40 32 40 38 30 34 37 10 37 6 30Z" fill="#b9aee6" />
        <rect x="6.5" y="12.5" width="31" height="21" rx="9.5" fill="#222a4a" stroke="#5546b8" strokeWidth="1.2" />
        <rect x="14.5" y="19" width="3.8" height="9" rx="1.6" fill="#fff" />
        <rect x="25.7" y="19" width="3.8" height="9" rx="1.6" fill="#fff" />
      </svg>
      <svg className="mt-[12px] ml-[38px] h-[38px] w-[38px]" viewBox="0 0 38 38" fill="none" stroke="#fff" strokeWidth="2.4">
        <circle cx="18" cy="18" r="15.8" />
        <path d="M28.5 29 35.5 35.5" strokeWidth="2.8" />
      </svg>
    </div>
  );
}

type Cell = { label: string; lw: number; value: string; vw: number; tone: string; sup?: boolean };
const QUOTES: { box: string; cells: Cell[] }[] = [
  { box: "w-[148px]", cells: [
    { label: "高", lw: 25, value: "18.22", vw: 59, tone: "text-[#dd3333]" },
    { label: "低", lw: 25, value: "16.70", vw: 59, tone: "text-[#069606]" },
    { label: "开", lw: 25, value: "18.04", vw: 59, tone: "text-[#dd3333]" },
  ] },
  { box: "ml-[22px] w-[149px]", cells: [
    { label: "市值", lw: 51, value: "96.24亿", vw: 88, tone: "text-[#303030]" },
    { label: "流通", lw: 51, value: "96.13亿", vw: 88, tone: "text-[#303030]" },
    { label: "市盈", lw: 51, value: "45.29", vw: 60, tone: "text-[#303030]", sup: true },
  ] },
  { box: "ml-[21px] w-[148px]", cells: [
    { label: "量比", lw: 52, value: "2.88", vw: 47, tone: "text-[#dd3333]" },
    { label: "换", lw: 25, value: "17.50%", vw: 80, tone: "text-[#303030]" },
    { label: "额", lw: 25, value: "16.95亿", vw: 86, tone: "text-[#303030]" },
  ] },
];

function Quote() {
  return (
    <div className="h-[138px]">
      <div className="flex h-[127px] pt-[10px]">
        <div className="w-[170px] shrink-0 text-[#069606]">
          <Fit w={112} className="mt-[12px] ml-[19px] text-[53px] leading-[56px] font-semibold">17.11</Fit>
          <div className="mt-[3px] flex pl-[15px] text-[24px] leading-[26px] font-medium">
            <Fit w={57}>−0.58</Fit>
            <Fit w={74} className="ml-[15px]">−3.28%</Fit>
          </div>
        </div>
        {QUOTES.map((col) => (
          <div key={col.box} className={`shrink-0 ${col.box}`}>
            {col.cells.map((c) => (
              <div key={c.label} className="flex h-[39px] items-center text-[25px] leading-[38px]">
                <Fit w={c.lw} className="text-[#666]">{c.label}</Fit>
                {c.sup && <Fit w={27} className="-mt-[10px] text-[15px] leading-none text-[#777]">TTM</Fit>}
                <Fit w={c.vw} className={`ml-auto font-medium ${c.tone}`}>{c.value}</Fit>
              </div>
            ))}
          </div>
        ))}
      </div>
      <svg className="-mt-[7px] ml-[643px] h-[11px] w-[11px]" viewBox="0 0 11 11"><path d="M11 0V10H1Z" fill="#c9c9c9" /></svg>
    </div>
  );
}

function PeriodTabs() {
  return (
    <div className="flex h-[57px] items-start border-b border-[#eee] pt-[13px] text-[24px] leading-[33px] text-[#6a6a6a]">
      <Fit w={48} className="ml-[22px]">分时</Fit>
      <div className="ml-[43px] flex flex-col items-center">
        <Fit w={41} className="font-bold text-[#303030]">日K</Fit>
        <div className="mt-[5px] h-[5px] w-[21px] rounded-full bg-[#dd3333]" />
      </div>
      <Fit w={42} className="ml-[42px]">周K</Fit>
      <Fit w={41} className="ml-[41px]">月K</Fit>
      <Fit w={48} className="ml-[42px]">五日</Fit>
      <Fit w={48} className="ml-[45px]">更多</Fit>
      <svg className="mt-[10px] ml-[5px] h-[11px] w-[14px]" viewBox="0 0 14 11"><path d="M0 0H14L7 11Z" fill="#a3a3a3" /></svg>
      <svg className="mt-[2px] ml-[86px] h-[28px] w-[29px]" viewBox="0 0 29 28" fill="none" stroke="#999" strokeWidth="2.4">
        <path d="M8.5 1.6H20.5L27.3 14 20.5 26.4H8.5L1.7 14Z" strokeLinejoin="round" />
        <circle cx="14.5" cy="14" r="4.3" />
      </svg>
    </div>
  );
}

function Caret() {
  return <svg className="h-[8px] w-[11px]" viewBox="0 0 11 8"><path d="M0 0H11L5.5 8Z" fill="#666" /></svg>;
}

function Averages() {
  return (
    <div className="flex h-[55px] text-[20px] leading-[24px] font-medium">
      <div className="mt-[12px] ml-[10px] flex h-[31px] w-[68px] items-center gap-[5px] rounded-[4px] bg-[#f2f2f2] pl-[6px]">
        <Fit w={39} className="font-normal text-[#303030]">均线</Fit>
        <Caret />
      </div>
      <div className="mt-[6px] ml-[8px] w-[503px]">
        <div className="flex">
          <Fit w={38} className="font-normal text-[#303030]">日线</Fit>
          <Fit w={75} className="ml-[15px] text-[#222]">M5:16.84</Fit>
          <Fit w={85} className="ml-[14px] text-[#e6a417]">M11:16.55</Fit>
          <Fit w={85} className="ml-[14px] text-[#f5617e]">M21:16.80</Fit>
          <Fit w={85} className="ml-[14px] text-[#68c043]">M30:16.91</Fit>
        </div>
        <div className="flex">
          <Fit w={85} className="text-[#2f77ad]">M55:16.38</Fit>
          <Fit w={95} className="ml-[14px] text-[#5a1560]">M144:16.09</Fit>
        </div>
      </div>
      <Fit w={59} className="mt-[6px] font-normal text-[#444]">前复权</Fit>
    </div>
  );
}

function TimeAxis() {
  return (
    <div className="h-[45px] bg-gradient-to-b from-[#f4f4f4] to-white px-[7px] text-[20px] leading-[24px] font-medium text-[#7c7c7c]">
      <svg className="block h-[10px] w-[644px]" viewBox="0 0 644 10">
        <path d="M157 1V9M319 1V9M481 1V9M643 1V9" stroke="#888" strokeWidth="2" />
      </svg>
      <div className="mt-[2px] flex">
        <Fit w={113} className="text-[#666]">2024−06−03</Fit>
        <Fit w={56} className="ml-[16px] text-[#a0a0a0]">09−24</Fit>
        <Fit w={57} className="ml-[106px]">01−23</Fit>
        <Fit w={57} className="ml-[105px]">05−30</Fit>
        <Fit w={57} className="ml-[77px]">09−23</Fit>
      </div>
    </div>
  );
}

function Selector({ name, w }: { name: string; w: number }) {
  return (
    <div className="flex h-[27px] items-center gap-[7px] rounded-[4px] bg-[#f2f2f2] pr-[8px] pl-[7px]">
      <Fit w={w} className="text-[#303030]">{name}</Fit>
      <Caret />
    </div>
  );
}

function Help() {
  return <div className="ml-[4px] flex h-[21px] w-[21px] items-center justify-center rounded-full border-2 border-[#ccc] text-[15px] leading-none text-[#bbb]">?</div>;
}

type Reading = { text: string; w: number; tone: string; gap: string };

function Panel({ name, w, help, readings, second, chart }: {
  name: string; w: number; help?: boolean; readings: Reading[]; second?: Reading; chart: ReactNode;
}) {
  return (
    <div className="mx-[7px] grid [&>*]:col-start-1 [&>*]:row-start-1">
      {chart}
      <div className="text-[21px] leading-[27px]">
        <div className="mt-[9px] flex h-[27px] items-center pl-[7px]">
          <Selector name={name} w={w} />
          {help && <Help />}
          {readings.map((r) => (
            <Fit key={r.text} w={r.w} className={`${r.gap} ${r.tone}`}>{r.text}</Fit>
          ))}
          {help && <Fit w={126} className="mr-[7px] ml-auto text-[#4a8fe0]">查看暗盘资金</Fit>}
        </div>
        {second && (
          <div className="-mt-[3px] flex h-[27px]">
            <Fit w={second.w} className={`${second.gap} ${second.tone}`}>{second.text}</Fit>
          </div>
        )}
      </div>
    </div>
  );
}

function InfoTabs() {
  return (
    <div className="flex h-[56px] items-end text-[26px] leading-[40px] text-[#6a6a6a]">
      <div className="flex h-[41px] w-[648px] items-center overflow-hidden [mask-image:linear-gradient(to_right,black_620px,transparent_652px)]">
        <svg className="ml-[33px] h-[22px] w-[25px] shrink-0" viewBox="0 0 25 22">
          <path d="M6 1.5H19L24 8 12.5 21 1 8Z" fill="#cfa973" strokeLinejoin="round" stroke="#cfa973" />
          <path d="M9.5 7H15.5" stroke="#fff" strokeWidth="1.8" strokeLinecap="round" />
        </svg>
        <Fit w={117} className="ml-[18px] text-[34px] font-semibold text-[#828282] italic">Level−2</Fit>
        <Fit w={52} className="ml-[39px]">看点</Fit>
        <Fit w={53} className="ml-[39px]">资讯</Fit>
        <Fit w={58} className="ml-[35px] text-[29px] font-bold text-[#303030]">盘口</Fit>
        <Fit w={53} className="ml-[36px]">资金</Fit>
        <Fit w={53} className="ml-[38px]">社区</Fit>
      </div>
    </div>
  );
}

function Action({ label, w, box, children }: { label: string; w: number; box: string; children: ReactNode }) {
  return (
    <div className={`flex flex-col items-center ${box}`}>
      <svg className="mt-[13px] h-[34px] w-[36px]" viewBox="0 0 36 34" fill="none" stroke="#c9c9c9" strokeWidth="1.7">{children}</svg>
      <Fit w={w} className="mt-[4px] leading-[26px] text-[#d0d0d0]">{label}</Fit>
    </div>
  );
}

function BottomBar() {
  return (
    <div className="h-[157px] bg-[#262626] text-[20px]">
      <div className="flex h-[91px]">
        <div className="flex w-[151px] flex-col items-center">
          <svg className="mt-[8px] h-[9px] w-[15px]" viewBox="0 0 15 9"><path d="M7.5 0 15 9H0Z" fill="#b5b5b5" /></svg>
          <Fit w={83} className="mt-[8px] leading-[26px] text-[#a8a8a8]">消费电子</Fit>
          <Fit w={68} className="mt-[10px] text-[22px] leading-[26px] text-[#12e012]">−1.78%</Fit>
        </div>
        <Action label="下单" w={41} box="w-[127px]">
          <path d="M7 1.5H28A3.5 3.5 0 0 1 31.5 5V24L24.5 32.2H7A3.5 3.5 0 0 1 3.5 28.7V5A3.5 3.5 0 0 1 7 1.5ZM31 24.5H27A2.5 2.5 0 0 0 24.5 27V32" />
          <path d="M8.5 9.5H27M8.5 14H27M8.5 18.5H27M8.5 23H21" />
        </Action>
        <Action label="诊股" w={41} box="w-[126px]">
          <rect x="2" y="6" width="32" height="25" rx="3" />
          <path d="M12 3.2H24M18 13V23M13 18H23" />
          <path d="M7 32.3H12M24 32.3H29" strokeWidth="2.2" />
        </Action>
        <Action label="删自选" w={62} box="w-[127px]">
          <rect x="4" y="3" width="28" height="28" />
          <path d="M11 17.5H25" />
        </Action>
        <Action label="功能" w={41} box="w-[127px]">
          <circle cx="18" cy="17" r="14.2" />
          <path d="M11.5 13H24.5M11.5 21H24.5" />
        </Action>
      </div>
      <svg className="mt-[16px] ml-[170px] h-[34px] w-[320px]" viewBox="0 0 320 34" fill="none" stroke="#d4d4d4" strokeWidth="2.2" strokeLinejoin="round">
        <path d="M32 4V30L10 17Z" />
        <circle cx="159" cy="17" r="13" />
        <rect x="283.5" y="5" width="24" height="24" rx="1" />
      </svg>
    </div>
  );
}

export default function App() {
  return (
    <div className="h-[1416px] w-[658px] overflow-hidden bg-white font-[Roboto,'Noto_Sans_CJK_SC',sans-serif]">
      <header className="bg-[#f12f37]">
        <StatusBar />
        <TitleBar />
      </header>
      <Quote />
      <div className="h-[6px] bg-[#f5f5f5]" />
      <PeriodTabs />
      <Averages />
      <div className="flex h-[273px] pl-[7px]"><PriceChart /></div>
      <TimeAxis />
      <Panel
        name="成交量" w={62} chart={<VolumeChart />}
        readings={[
          { text: "量:98.34万", w: 94, tone: "text-[#356b1c]", gap: "ml-[7px]" },
          { text: "M30:40.40万", w: 112, tone: "text-[#303030]", gap: "ml-[12px]" },
          { text: "换手率:", w: 69, tone: "text-[#303030]", gap: "ml-[12px]" },
          { text: "17.50%", w: 63, tone: "text-[#41a5e1]", gap: "" },
        ]}
      />
      <div className="h-[5px]" />
      <Panel
        name="MACD(12,26,9)" w={140} help chart={<MacdChart />}
        readings={[
          { text: "MACD:+0.09", w: 116, tone: "text-[#dd3333]", gap: "ml-[10px]" },
          { text: "DIFF:+0.06", w: 99, tone: "text-[#303030]", gap: "ml-[11px]" },
        ]}
        second={{ text: "DEA:+0.02", w: 96, tone: "text-[#f4713a]", gap: "ml-[7px]" }}
      />
      <div className="h-[6px]" />
      <Panel
        name="KDJ(9,3,3)" w={96} help chart={<KdjChart />}
        readings={[
          { text: "K:+59.12", w: 79, tone: "text-[#303030]", gap: "ml-[11px]" },
          { text: "D:+52.00", w: 80, tone: "text-[#f4713a]", gap: "ml-[11px]" },
          { text: "J:+73.36", w: 76, tone: "text-[#cb3f80]", gap: "ml-[10px]" },
        ]}
      />
      <div className="h-[6px]" />
      <Panel
        name="RSI(6,12,24)" w={110} help chart={<RsiChart />}
        readings={[
          { text: "RSI6:+56.46", w: 107, tone: "text-[#303030]", gap: "ml-[11px]" },
          { text: "RSI12:+54.32", w: 118, tone: "text-[#f4713a]", gap: "ml-[11px]" },
        ]}
        second={{ text: "RSI24:+53.65", w: 118, tone: "text-[#cb3f80]", gap: "ml-[7px]" }}
      />
      <div className="mt-[3px] h-[7px] bg-[#f5f5f5]" />
      <InfoTabs />
      <BottomBar />
    </div>
  );
}
